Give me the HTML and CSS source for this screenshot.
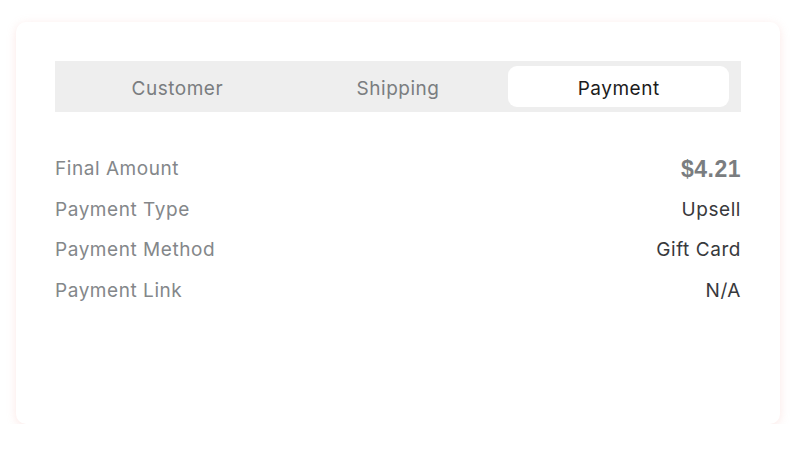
FILE: index.html
```html
<!DOCTYPE html>
<html>
<head>
<meta charset="utf-8">
<link rel="stylesheet" href="styles.css">
</head>
<body>
<div class="card">
  <div class="tabs">
    <div class="tab">Customer</div>
    <div class="tab">Shipping</div>
    <div class="tab active">Payment</div>
  </div>
  <div class="rows">
    <div class="row"><span class="label">Final Amount</span><span class="value amount">$4.21</span></div>
    <div class="row"><span class="label">Payment Type</span><span class="value">Upsell</span></div>
    <div class="row"><span class="label">Payment Method</span><span class="value">Gift Card</span></div>
    <div class="row"><span class="label">Payment Link</span><span class="value">N/A</span></div>
  </div>
</div>
</body>
</html>
```
FILE: styles.css
```css
html, body {
  margin: 0;
  padding: 0;
  background: #fff;
}
body {
  font-family: "Inter", "Liberation Sans", sans-serif;
  padding: 22px 20px 0 16px;
}
.card {
  height: 402px;
  box-sizing: border-box;
  padding: 39px;
  border-radius: 10px;
  background: #fff;
  box-shadow: 0 2px 10px rgba(240, 170, 160, 0.28);
}
.tabs {
  display: flex;
  height: 51px;
  box-sizing: border-box;
  padding: 5px 12px;
  background: #eeeeee;
}
.tab {
  flex: 1;
  display: flex;
  align-items: center;
  justify-content: center;
  padding-top: 3px;
  font-size: 19px;
  letter-spacing: 0.5px;
  color: #7a7d80;
  border-radius: 9px;
}
.tab.active {
  background: #fff;
  color: #1c1c1c;
}
.rows {
  margin-top: 36px;
}
.row {
  display: flex;
  justify-content: space-between;
  align-items: center;
  height: 40.7px;
  font-size: 19px;
  letter-spacing: 0.55px;
}
.label {
  color: #84878a;
}
.value {
  color: #38393c;
}
.amount {
  padding-top: 2px;
  font-family: "Liberation Sans", sans-serif;
  font-weight: bold;
  font-size: 23px;
  letter-spacing: 0.5px;
  color: #7a7d80;
}
```
